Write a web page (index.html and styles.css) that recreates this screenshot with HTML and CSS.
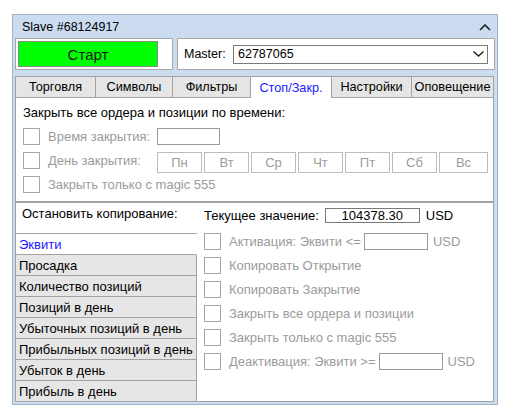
FILE: index.html
```html
<!DOCTYPE html>
<html lang="ru">
<head>
<meta charset="utf-8">
<title>Slave</title>
<link rel="stylesheet" href="styles.css">
</head>
<body>
<div class="window">
  <div class="titlebar">
    <span class="title">Slave #68124917</span>
    <svg class="collapse" width="12" height="7" viewBox="0 0 12 7"><polyline points="1,6 6,1 11,6" fill="none" stroke="#222" stroke-width="1.6"/></svg>
  </div>
  <div class="toprow">
    <div class="startbox"><div class="start">Старт</div></div>
    <div class="masterbox">
      <span class="master-label">Master:</span>
      <div class="combo">
        <span>62787065</span>
        <svg width="11" height="6" viewBox="0 0 11 6"><polyline points="0.5,0.5 5.5,5 10.5,0.5" fill="none" stroke="#222" stroke-width="1.4"/></svg>
      </div>
    </div>
  </div>
  <div class="tabs">
    <div class="tab t1">Торговля</div>
    <div class="tab t2">Символы</div>
    <div class="tab t3">Фильтры</div>
    <div class="tab t4 active">Стоп/Закр.</div>
    <div class="tab t5">Настройки</div>
    <div class="tab t6">Оповещение</div>
  </div>
  <div class="panel close-panel">
    <div class="heading">Закрыть все ордера и позиции по времени:</div>
    <div class="row">
      <span class="check"></span><span class="lbl fixed">Время закрытия:</span>
      <span class="field time"></span>
    </div>
    <div class="row">
      <span class="check"></span><span class="lbl fixed">День закрытия:</span>
      <div class="days">
        <span class="day">Пн</span><span class="day">Вт</span><span class="day">Ср</span><span class="day">Чт</span><span class="day">Пт</span><span class="day">Сб</span><span class="day last">Вс</span>
      </div>
    </div>
    <div class="row">
      <span class="check"></span><span class="lbl">Закрыть только с magic 555</span>
    </div>
  </div>
  <div class="panel stop-panel">
    <div class="leftcol">
      <div class="lefthead">Остановить копирование:</div>
      <div class="list">
        <div class="item active">Эквити</div>
        <div class="item">Просадка</div>
        <div class="item">Количество позиций</div>
        <div class="item">Позиций в день</div>
        <div class="item">Убыточных позиций в день</div>
        <div class="item">Прибыльных позиций в день</div>
        <div class="item">Убыток в день</div>
        <div class="item last">Прибыль в день</div>
      </div>
    </div>
    <div class="rightcol">
      <div class="righthead">
        <span>Текущее значение:</span>
        <span class="value">104378.30</span>
        <span class="usd">USD</span>
      </div>
      <div class="row r">
        <span class="check"></span><span class="lbl">Активация: Эквити &lt;=</span><span class="field amount"></span><span class="lbl usd2">USD</span>
      </div>
      <div class="row r">
        <span class="check"></span><span class="lbl">Копировать Открытие</span>
      </div>
      <div class="row r">
        <span class="check"></span><span class="lbl">Копировать Закрытие</span>
      </div>
      <div class="row r">
        <span class="check"></span><span class="lbl">Закрыть все ордера и позиции</span>
      </div>
      <div class="row r">
        <span class="check"></span><span class="lbl">Закрыть только с magic 555</span>
      </div>
      <div class="row r">
        <span class="check"></span><span class="lbl">Деактивация: Эквити &gt;=</span><span class="field amount"></span><span class="lbl usd2">USD</span>
      </div>
    </div>
  </div>
</div>
</body>
</html>
```

FILE: styles.css
```css
body {
  margin: 0;
  background: #ffffff;
  font-family: "Liberation Sans", Arial, sans-serif;
  font-size: 13px;
  color: #000;
}

.window {
  box-sizing: border-box;
  width: 486px;
  margin: 14px 0 0 12px;
  border: 1px solid #a5b2c3;
  background: #cbdcf1;
  padding: 0 2px 2px 2px;
}

.titlebar {
  height: 23px;
  display: flex;
  align-items: center;
  justify-content: space-between;
  padding: 0 4px 0 7px;
  font-size: 12.5px;
}

.collapse { display: block; margin-top: 1px; }

.toprow {
  display: flex;
  gap: 4px;
  height: 32px;
}

.startbox {
  box-sizing: border-box;
  width: 158px;
  background: #fff;
  border: 1px solid #a9a9a9;
  padding: 2px;
}

.start {
  box-sizing: border-box;
  width: 140px;
  height: 26px;
  background: #00ff00;
  border: 1px solid #8a8a8a;
  display: flex;
  align-items: center;
  justify-content: center;
  font-size: 15px;
  color: #1a1a1a;
}

.masterbox {
  flex: 1;
  box-sizing: border-box;
  background: #fff;
  border: 1px solid #a9a9a9;
  display: flex;
  align-items: center;
  padding-left: 6px;
}

.master-label { font-size: 12.5px; width: 49px; }

.combo {
  box-sizing: border-box;
  width: 255px;
  height: 19px;
  border: 1px solid #7a7a7a;
  display: flex;
  align-items: center;
  justify-content: space-between;
  padding: 0 3px 0 4px;
  font-size: 12.5px;
}

.combo svg { display: block; }

.tabs {
  display: flex;
  margin-top: 6px;
  height: 21px;
  align-items: flex-start;
}

.tab {
  box-sizing: border-box;
  height: 21px;
  background: #e5e5e5;
  border: 1px solid #a3a3a3;
  border-bottom: none;
  border-right: none;
  display: flex;
  align-items: center;
  justify-content: center;
  font-size: 12.7px;
}

.t1 { width: 80px; }
.t2 { width: 77px; }
.t3 { width: 78px; }
.t4 { width: 81px; }
.t5 { width: 80px; }
.t6 { width: 83px; border-right: 1px solid #a3a3a3; }

.tab.active {
  background: #fff;
  color: #1a1aff;
  height: 22px;
  position: relative;
  z-index: 1;
}

.panel {
  box-sizing: border-box;
  width: 479px;
  background: #fff;
  border: 1px solid #a3a3a3;
}

.close-panel {
  padding: 6px 0 5px 7px;
}

.heading {
  height: 18px;
  line-height: 18px;
  margin-bottom: 2px;
}

.row {
  display: flex;
  align-items: center;
  height: 24px;
}

.check {
  box-sizing: border-box;
  width: 17px;
  height: 17px;
  border: 1px solid #a6a6a6;
  background: #fff;
  flex: none;
}

.lbl {
  color: #9b9b9b;
  margin-left: 8px;
}

.lbl.fixed { width: 109px; }

.field {
  box-sizing: border-box;
  border: 1px solid #9a9a9a;
  background: #fff;
}

.field.time { width: 63px; height: 17px; }

.days {
  display: flex;
  gap: 2px;
  margin-top: 4px;
}

.day {
  box-sizing: border-box;
  width: 45px;
  height: 21px;
  border: 1px solid #bdbdbd;
  color: #9b9b9b;
  display: flex;
  align-items: center;
  justify-content: center;
}

.day.last { width: 49px; }

.stop-panel {
  display: flex;
  height: 200px;
}

.leftcol {
  width: 181px;
  flex: none;
}

.lefthead {
  height: 30px;
  box-sizing: border-box;
  padding: 3px 0 0 6px;
  line-height: 16px;
}

.list {
  border-top: 1px solid #a3a3a3;
}

.item {
  box-sizing: border-box;
  height: 21px;
  background: #e6e6e6;
  border-bottom: 1px solid #a3a3a3;
  border-right: 1px solid #a3a3a3;
  padding-left: 3px;
  display: flex;
  align-items: center;
}

.item.active {
  background: #fff;
  color: #1a1aff;
  border-right-color: transparent;
}

.item.last { border-bottom: none; height: 20px; }

.rightcol {
  flex: 1;
  padding-left: 7px;
}

.righthead {
  display: flex;
  align-items: center;
  height: 16px;
  margin-top: 4px;
  margin-bottom: 6px;
}

.value {
  box-sizing: border-box;
  width: 95px;
  height: 15px;
  border: 1px solid #7a7a7a;
  margin-left: 6px;
  display: flex;
  align-items: center;
  justify-content: center;
}

.usd { margin-left: 6px; }

.field.amount {
  width: 64px;
  height: 17px;
  margin-left: 3px;
}

.usd2 { margin-left: 5px; }
```
